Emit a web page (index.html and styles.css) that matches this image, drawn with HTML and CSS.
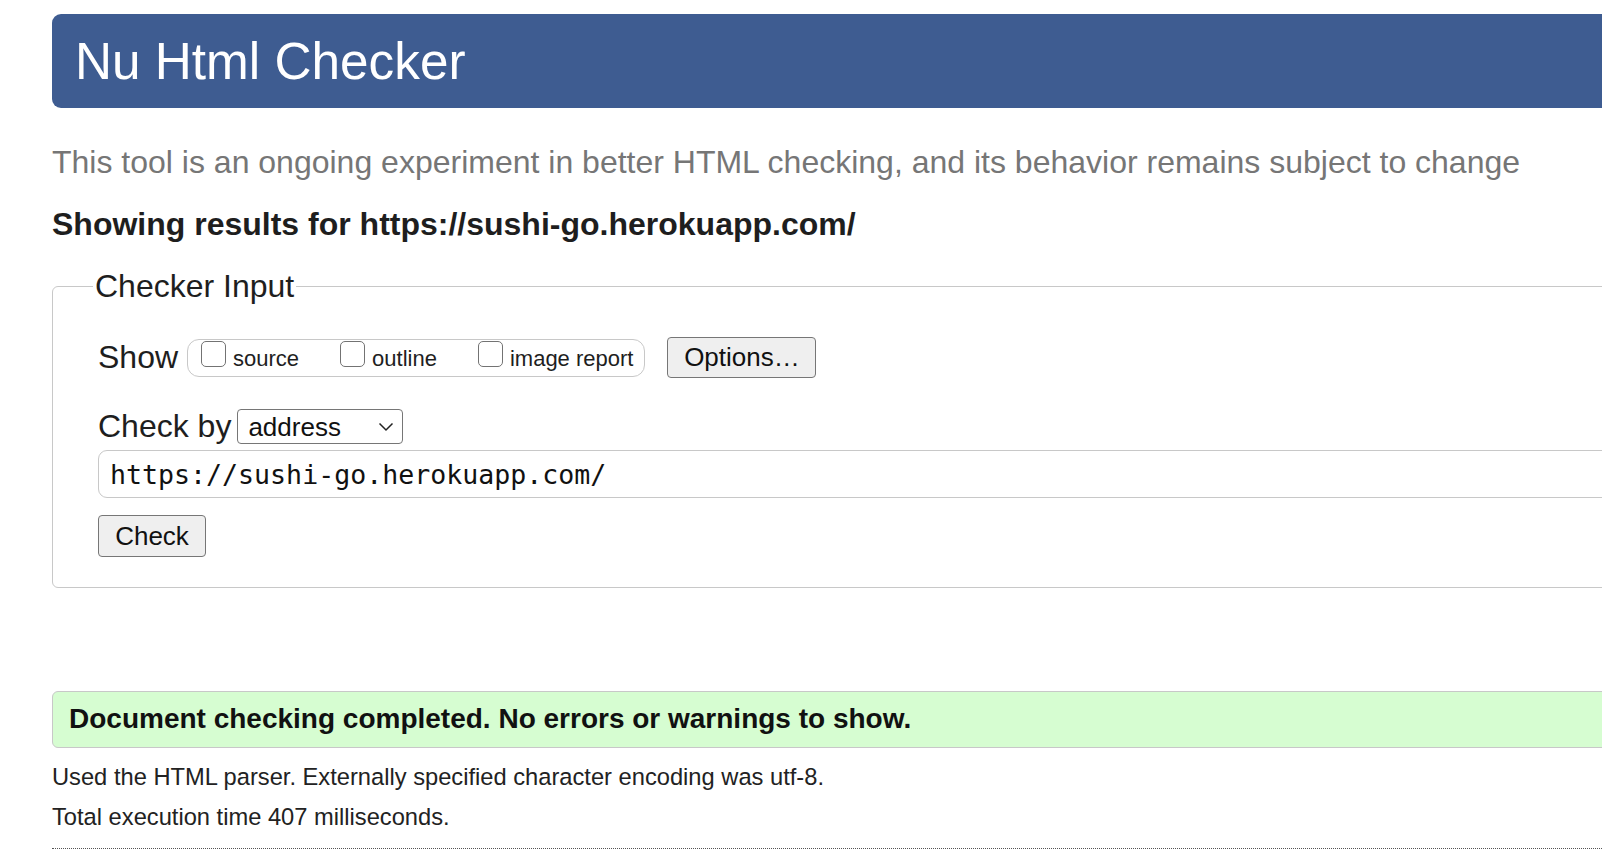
FILE: index.html
```html
<!DOCTYPE html>
<html lang="en">
<head>
<meta charset="utf-8">
<title>Nu Html Checker</title>
<link rel="stylesheet" href="styles.css">
</head>
<body>
<div class="page">
  <h1 class="title">Nu Html Checker</h1>
  <p class="intro">This tool is an ongoing experiment in better HTML checking, and its behavior remains subject to change</p>
  <h2 class="results-for">Showing results for https://sushi-go.herokuapp.com/</h2>
  <form class="checker">
    <fieldset class="input-set">
      <legend class="legend">Checker Input</legend>
      <div class="show-row">
        <span class="row-label">Show</span>
        <div class="opts">
          <label class="opt"><input type="checkbox" class="cb"><span class="opt-text">source</span></label>
          <label class="opt"><input type="checkbox" class="cb"><span class="opt-text">outline</span></label>
          <label class="opt"><input type="checkbox" class="cb"><span class="opt-text">image report</span></label>
        </div>
        <button type="button" class="btn btn-options">Options…</button>
      </div>
      <div class="by-row">
        <span class="row-label">Check by</span>
        <span class="select-wrap">
          <select class="select"><option>address</option></select>
          <svg class="chev" width="16" height="10" viewBox="0 0 16 10"><polyline points="1.5,1.5 8,8 14.5,1.5" fill="none" stroke="#222" stroke-width="1.5"/></svg>
        </span>
      </div>
      <input class="url" type="text" value="https://sushi-go.herokuapp.com/">
      <button type="button" class="btn btn-check">Check</button>
    </fieldset>
  </form>
  <div class="success">Document checking completed. No errors or warnings to show.</div>
  <p class="meta meta-first">Used the HTML parser. Externally specified character encoding was utf-8.</p>
  <p class="meta meta-second">Total execution time 407 milliseconds.</p>
  <hr class="dotted">
</div>
</body>
</html>
```

FILE: styles.css
```css
html {
  overflow: hidden;
  background: #fff;
}

body {
  margin: 0;
  font-family: "Liberation Sans", Arial, sans-serif;
  color: #222;
}

.page {
  width: 1760px;
  padding: 14px 0 0 52px;
}

.title {
  margin: 0;
  height: 94px;
  box-sizing: border-box;
  padding: 2px 0 0 23px;
  line-height: 92px;
  font-size: 51.3px;
  font-weight: normal;
  color: #fff;
  background: #3e5c91;
  border-radius: 9px;
}

.intro {
  margin: 36px 0 0;
  font-size: 32px;
  line-height: 37px;
  color: #767676;
}

.results-for {
  margin: 25px 0 0;
  font-size: 32px;
  line-height: 37px;
  font-weight: bold;
  color: #1e1e1e;
}

.checker {
  margin: 0;
}

.input-set {
  margin: 25px 0 0;
  padding: 32px 0 30px 45px;
  border: 1px solid #c8c8c8;
  border-radius: 6px;
  min-inline-size: 0;
}

.legend {
  margin-left: -5px;
  padding: 0 2px;
  font-size: 32px;
  line-height: 37px;
  color: #1e1e1e;
}

.show-row {
  display: flex;
  align-items: center;
  height: 41px;
}

.row-label {
  font-size: 32px;
  line-height: 37px;
  color: #1e1e1e;
}

.opts {
  display: flex;
  align-items: flex-start;
  box-sizing: border-box;
  height: 38px;
  margin-left: 9px;
  padding: 1px 11px 0 13px;
  border: 1px solid #c8c8c8;
  border-radius: 12px;
}

.opt {
  display: flex;
  align-items: flex-end;
  margin-right: 41px;
}

.opt:last-child {
  margin-right: 0;
}

.cb {
  appearance: none;
  -webkit-appearance: none;
  margin: 0;
  width: 25px;
  height: 26px;
  box-sizing: border-box;
  border: 1px solid #737373;
  border-radius: 5px;
  background: #fff;
}

.opt-text {
  margin-left: 7px;
  margin-bottom: -3px;
  font-size: 22px;
  line-height: 22px;
  color: #1e1e1e;
}

.btn {
  box-sizing: border-box;
  margin: 0;
  padding: 0;
  font-family: "Liberation Sans", Arial, sans-serif;
  font-size: 26px;
  color: #111;
  background: #efefef;
  border: 1px solid #767676;
  border-radius: 4px;
}

.btn-options {
  width: 149px;
  height: 41px;
  margin-left: 22px;
}

.by-row {
  display: flex;
  align-items: center;
  height: 35px;
  margin-top: 31px;
}

.select-wrap {
  position: relative;
  margin-left: 6px;
  display: block;
}

.select {
  display: block;
  appearance: none;
  -webkit-appearance: none;
  box-sizing: border-box;
  width: 166px;
  height: 35px;
  margin: 0;
  padding: 0 0 0 10px;
  font-family: "Liberation Sans", Arial, sans-serif;
  font-size: 26px;
  color: #111;
  background: #fff;
  border: 1px solid #767676;
  border-radius: 4px;
}

.chev {
  position: absolute;
  right: 9px;
  top: 13px;
}

.url {
  display: block;
  box-sizing: border-box;
  width: calc(100% - 44px);
  height: 48px;
  margin: 6px 0 0;
  padding: 0 11px;
  font-family: "DejaVu Sans Mono", "Liberation Mono", monospace;
  font-size: 26.6px;
  color: #111;
  background: #fff;
  border: 1px solid #c8c8c8;
  border-radius: 9px;
  outline: none;
}

.btn-check {
  display: block;
  width: 108px;
  height: 42px;
  margin-top: 17px;
}

.success {
  margin-top: 103px;
  padding: 0 0 2px 16px;
  line-height: 53px;
  font-size: 28px;
  font-weight: bold;
  color: #111;
  background: #d6fdd1;
  border: 1px solid #c8c8c8;
  border-radius: 6px;
}

.meta {
  margin: 0;
  font-size: 23.7px;
  line-height: 28px;
  color: #222;
}

.meta-first {
  margin-top: 15px;
}

.meta-second {
  margin-top: 12px;
}

.dotted {
  margin: 17px 0 0;
  height: 0;
  border: 0;
  border-top: 1px dotted #555;
}
```
